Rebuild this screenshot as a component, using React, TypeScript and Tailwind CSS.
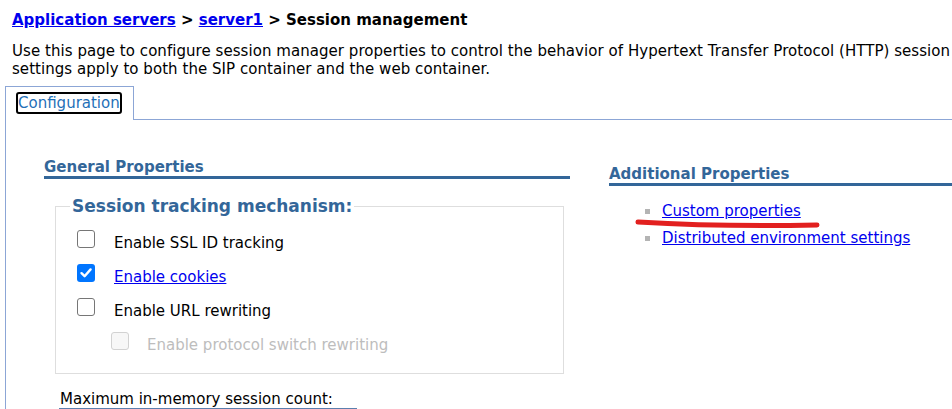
import React from "react";

const Checkbox = ({ checked = false, disabled = false }: { checked?: boolean; disabled?: boolean }) => {
	if (checked) {
		return (
			<span className="flex h-[18px] w-[18px] shrink-0 items-center justify-center rounded-[3px] bg-[#0075ff]">
				<svg width="14" height="14" viewBox="0 0 14 14">
					<path d="M2.5 7.2 L5.6 10.2 L11.6 3.4" fill="none" stroke="white" strokeWidth="2.4" strokeLinecap="round" strokeLinejoin="round" />
				</svg>
			</span>
		);
	}
	return (
		<span
			className={
				disabled
					? "block h-[18px] w-[18px] shrink-0 rounded-[3px] border border-[#d2d2d2] bg-[#f7f7f7]"
					: "block h-[18px] w-[18px] shrink-0 rounded-[3px] border-[1.5px] border-[#767676] bg-white"
			}
		/>
	);
};

const options = [
	{ label: "Enable SSL ID tracking", checked: false, link: false },
	{ label: "Enable cookies", checked: true, link: true },
	{ label: "Enable URL rewriting", checked: false, link: false },
];

const additionalLinks = ["Custom properties", "Distributed environment settings"];

export default function App() {
	return (
		<div className="relative h-[409px] w-[952px] overflow-hidden bg-white font-['DejaVu_Sans',Verdana,sans-serif] text-[15px] leading-[18px] text-black">
			{/* Breadcrumb */}
			<div className="whitespace-nowrap pl-3 pt-[11px] font-bold">
				<a href="#" className="text-[#0000ee] underline">Application servers</a>
				{" > "}
				<a href="#" className="text-[#0000ee] underline">server1</a>
				{" > Session management"}
			</div>

			<div className="mt-[13px] whitespace-nowrap pl-3 tracking-[0.05px]">
				<div>Use this page to configure session manager properties to control the behavior of Hypertext Transfer Protocol (HTTP) session</div>
				<div>settings apply to both the SIP container and the web container.</div>
			</div>

			{/* Tabs */}
			<div className="ml-[5px] mt-[8px] flex items-end">
				<div className="h-[34px] w-[129px] border-l border-r border-t border-[#8ca6d6] pl-[10px] pt-[5px]">
					<span className="inline-block rounded-[3px] border-2 border-black leading-[18px] text-[#1f70b8]">Configuration</span>
				</div>
				<div className="h-[34px] flex-1 border-b border-[#8ca6d6]" />
			</div>

			{/* Content */}
			<div className="ml-[5px] flex h-[300px] border-l border-[#8ca6d6]">
				{/* General properties */}
				<div className="ml-[38px] w-[526px] pt-[38px]">
					<div className="font-bold text-[#336699]">General Properties</div>
					<div className="h-[3px] bg-[#336699]" />

					<fieldset className="ml-[11px] mt-[17px] w-[509px] border border-[#dedede] pb-[19px] pl-[21px]">
						<legend className="-ml-[7px] px-[2px] text-[17px] font-bold leading-[20px] text-[#336699]">Session tracking mechanism:</legend>
						<div className="mt-[14px] flex flex-col gap-[12px]">
							{options.map((opt) => (
								<div key={opt.label} className="flex items-start gap-[19px]">
									<Checkbox checked={opt.checked} />
									<span className={opt.link ? "mt-[4px] text-[#0000ee] underline" : "mt-[4px]"}>{opt.label}</span>
								</div>
							))}
							<div className="ml-[34px] flex items-start gap-[18px]">
								<Checkbox disabled />
								<span className="mt-[4px] text-[#bdbdbd]">Enable protocol switch rewriting</span>
							</div>
						</div>
					</fieldset>

					<div className="ml-[16px] mt-[16px]">Maximum in-memory session count:</div>
					<div className="ml-[15px] h-[24px] w-[298px] border border-[#5b7fae]" />
				</div>

				{/* Additional properties */}
				<div className="ml-[39px] flex-1 pt-[45px]">
					<div className="font-bold text-[#336699]">Additional Properties</div>
					<div className="h-[3px] bg-[#336699]" />
					<ul className="mt-[16px] flex flex-col gap-[9px]">
						{additionalLinks.map((name) => (
							<li key={name} className="flex items-center whitespace-nowrap pl-[36px]">
								<span className="mr-[12px] block h-[5px] w-[5px] bg-[#b4b4b4]" />
								<a href="#" className="text-[#0000ee] underline">{name}</a>
							</li>
						))}
					</ul>
				</div>
			</div>

			{/* Red annotation */}
			<svg className="absolute left-[630px] top-[216px]" width="194" height="16" viewBox="0 0 194 16">
				<path d="M8 6 Q 90 11 187 9" fill="none" stroke="#e2201f" strokeWidth="5" strokeLinecap="round" />
			</svg>
		</div>
	);
}
